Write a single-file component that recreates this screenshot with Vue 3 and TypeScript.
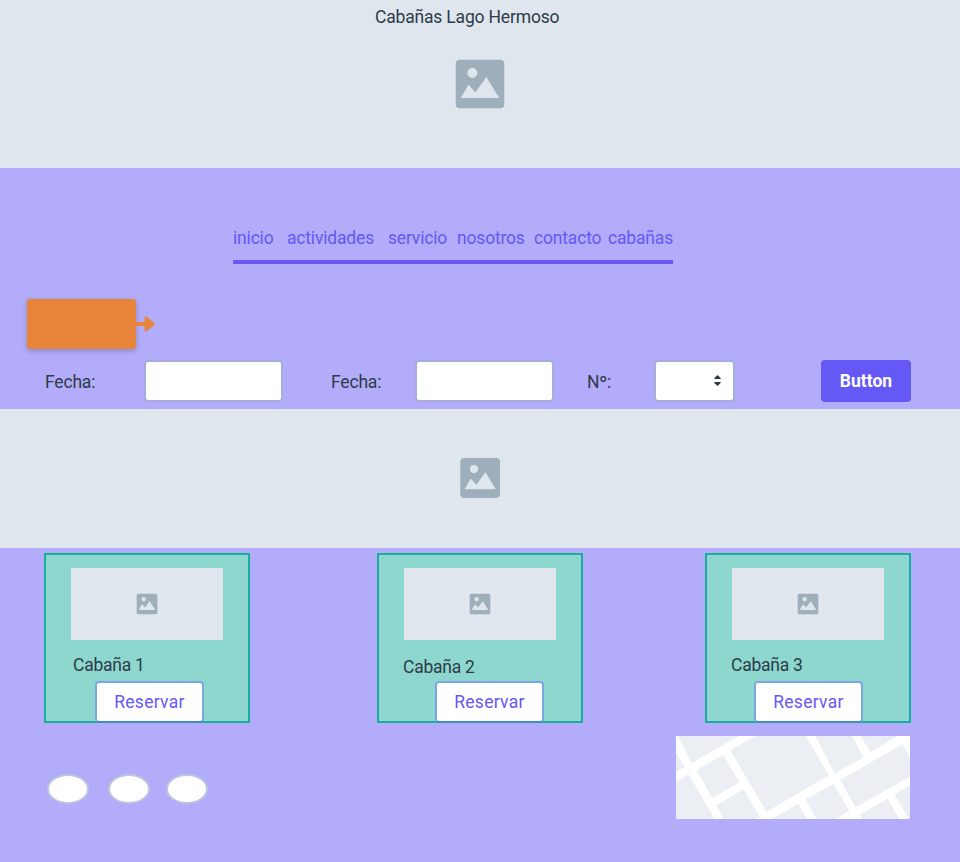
<script setup lang="ts">
interface NavItem {
  label: string
  width: number
}

interface Cabin {
  name: string
  variant: string
}

const navItems: NavItem[] = [
  { label: 'inicio', width: 54 },
  { label: 'actividades', width: 101 },
  { label: 'servicio', width: 69 },
  { label: 'nosotros', width: 77 },
  { label: 'contacto', width: 74 },
  { label: 'cabañas', width: 65 },
]

const cabins: Cabin[] = [
  { name: 'Cabaña 1', variant: 'first' },
  { name: 'Cabaña 2', variant: 'second' },
  { name: 'Cabaña 3', variant: 'third' },
]

const blocks: string[] = [
  '39,33 221,33 79,115',
  '33,84 60,125 33,142',
  '33,170 72,149 149,282 33,282',
  '94,136 175,90 223,172 142,219',
  '153,241 236,193 284,275 271,282 177,282',
  '196,76 272,33 422,33 492,151 304,261',
  '451,33 561,33 595,97 509,145',
  '587,33 697,33 616,82',
  '526,164 712,58 735,98 735,155 571,247',
  '422,223 506,177 553,258 512,282 454,282',
  '320,282 400,237 426,282',
  '585,268 668,221 703,282 592,282',
  '688,208 735,182 735,288',
]
</script>

<template>
  <svg width="0" height="0" class="defs" aria-hidden="true">
    <symbol id="picture" viewBox="0 0 148 148">
      <path fill="#9eaeba" fill-rule="evenodd" d="M16 0H132Q148 0 148 16V132Q148 148 132 148H16Q0 148 0 132V16Q0 0 16 0ZM51 26A15 15 0 1 0 51 56A15 15 0 1 0 51 26ZM16 116H132L93 53L60 99L39 76Z" />
    </symbol>
  </svg>
  <div class="page">
    <header class="hero">
      <h1 class="title">Cabañas Lago Hermoso</h1>
      <svg class="icon-large" viewBox="0 0 50 50"><use href="#picture" x=".5" y=".5" width="49" height="49" /></svg>
    </header>

    <nav class="nav">
      <a v-for="item in navItems" :key="item.label" class="nav-item" :style="{ width: item.width + 'px' }">{{ item.label }}</a>
    </nav>

    <div class="callout">
      <div class="callout-box"></div>
      <svg class="arrow" width="20" height="16" viewBox="0 0 20 16">
        <path d="M0 6H8.500V2Q8.800 .1 10.500 .8L18 6.700Q19.400 8 18 9.300L10.500 15.200Q8.800 15.900 8.500 14V10H0Z" fill="#e8833a" />
      </svg>
    </div>

    <form class="search">
      <label class="label from">Fecha:</label>
      <div class="field"></div>
      <label class="label to">Fecha:</label>
      <div class="field"></div>
      <label class="label count">Nº:</label>
      <div class="field select">
        <svg width="7" height="11" viewBox="0 0 7 11">
          <path d="M3.500 0L6.600 3V4H.4V3ZM3.500 11L6.600 8V7H.4V8Z" fill="#293845" />
        </svg>
      </div>
      <button class="submit" type="button">Button</button>
    </form>

    <section class="banner">
      <svg class="icon-medium"><use href="#picture" /></svg>
    </section>

    <section class="cards">
      <article v-for="cabin in cabins" :key="cabin.name" class="card" :class="cabin.variant">
        <div class="photo">
          <svg class="icon-small" viewBox="0 0 22 22"><use href="#picture" x=".4" y=".4" width="21.2" height="21.2" /></svg>
        </div>
        <h2 class="name">{{ cabin.name }}</h2>
        <button class="reserve" type="button">Reservar</button>
      </article>
    </section>

    <footer class="footer">
      <span class="dot"></span>
      <span class="dot"></span>
      <span class="dot"></span>
      <svg class="map" viewBox="33 33 702 249" preserveAspectRatio="none">
        <rect x="33" y="33" width="702" height="249" fill="#fff" />
        <polygon v-for="points in blocks" :key="points" :points="points" fill="#ebeff4" />
      </svg>
    </footer>
  </div>
</template>

<style>
body {
  background: #b2acfa;
}
</style>

<style scoped>
.defs {
  position: absolute;
}
.page {
  width: 960px;
  height: 862px;
  overflow: hidden;
  background: #b2acfa;
  color: #2c3c49;
  font-family: Roboto, "Liberation Sans", sans-serif;
  font-size: 17.5px;
  line-height: 24px;
  letter-spacing: -0.18px;
}
h1,
h2 {
  margin: 0;
  font-size: inherit;
  font-weight: 400;
}
button {
  box-sizing: border-box;
  padding: 0;
  font: inherit;
}
.hero {
  height: 168px;
  background: #dfe6ed;
  display: flex;
  flex-direction: column;
  align-items: center;
}
.title {
  width: 210px;
  height: 29px;
  padding-top: 5px;
  white-space: nowrap;
}
.icon-large {
  width: 50px;
  height: 50px;
  margin-top: 25px;
}
.nav {
  width: 440px;
  height: 34px;
  margin: 58px 0 0 233px;
  border-bottom: 4px solid #6558f5;
  display: flex;
  color: #6558f5;
}
.nav-item {
  flex: none;
  white-space: nowrap;
}
.callout {
  margin: 35px 0 0 27px;
  display: flex;
  align-items: center;
}
.callout-box {
  width: 109px;
  height: 50px;
  border-radius: 3px;
  background: #e8833a;
  box-shadow: 0 2px 5px rgba(41, 56, 69, 0.3);
}
.search {
  height: 42px;
  margin-top: 11px;
  padding: 0 49px 7px 45px;
  display: flex;
  align-items: center;
}
.label {
  flex: none;
  padding-top: 2px;
  white-space: nowrap;
}
.from {
  width: 99px;
}
.to {
  width: 85px;
  margin-left: 48px;
  margin-right: -1px;
}
.count {
  width: 67px;
  margin-left: 33px;
}
.field {
  box-sizing: border-box;
  flex: none;
  width: 139px;
  height: 42px;
  border: 2px solid #a5adda;
  border-radius: 4px;
  background: #fff;
}
.select {
  width: 81px;
  display: flex;
  align-items: center;
  justify-content: flex-end;
  padding: 0 12px 1px 0;
}
.submit {
  width: 90px;
  height: 42px;
  margin-left: auto;
  border: 0;
  border-radius: 4px;
  background: #6558f5;
  color: #fff;
  font-weight: 700;
  letter-spacing: 0;
}
.banner {
  height: 139px;
  padding-bottom: 1px;
  box-sizing: border-box;
  background: #dfe6ed;
  display: flex;
  align-items: center;
  justify-content: center;
}
.icon-medium {
  width: 40.5px;
  height: 40px;
}
.cards {
  padding: 5px 0 0 44px;
  display: flex;
}
.card {
  box-sizing: border-box;
  width: 206px;
  height: 170px;
  border: 2px solid #1aae9f;
  background: #8dd7cf;
  padding: 13px 0 0 25px;
}
.second {
  margin-left: 127px;
}
.third {
  margin-left: 122px;
}
.photo {
  width: 152px;
  height: 72px;
  background: #dfe6ed;
  display: flex;
  align-items: center;
  justify-content: center;
}
.icon-small {
  width: 22px;
  height: 22px;
}
.name {
  height: 28px;
  padding-top: 13px;
  margin-left: 2px;
  letter-spacing: -0.25px;
}
.second .name {
  height: 26px;
  padding-top: 15px;
  margin-left: -1px;
}
.third .name {
  margin-left: -1px;
}
.reserve {
  display: block;
  width: 109px;
  height: 42px;
  margin-left: 24px;
  border: 2px solid #7ca6e0;
  border-bottom-color: #3d8fbd;
  border-radius: 4px;
  background: #fff;
  color: #6558f5;
  letter-spacing: 0.3px;
}
.second .reserve {
  margin-left: 31px;
}
.third .reserve {
  margin-left: 22px;
}
.footer {
  margin-top: 13px;
  padding: 0 50px 0 47px;
  display: flex;
}
.dot {
  box-sizing: border-box;
  width: 42px;
  height: 30px;
  margin-top: 38px;
  border: 2px solid #bcc7dc;
  border-radius: 50%;
  background: #fff;
}
.dot:nth-child(2) {
  margin-left: 19px;
}
.dot:nth-child(3) {
  margin-left: 16px;
}
.map {
  width: 234px;
  height: 83px;
  margin-left: auto;
}
</style>
